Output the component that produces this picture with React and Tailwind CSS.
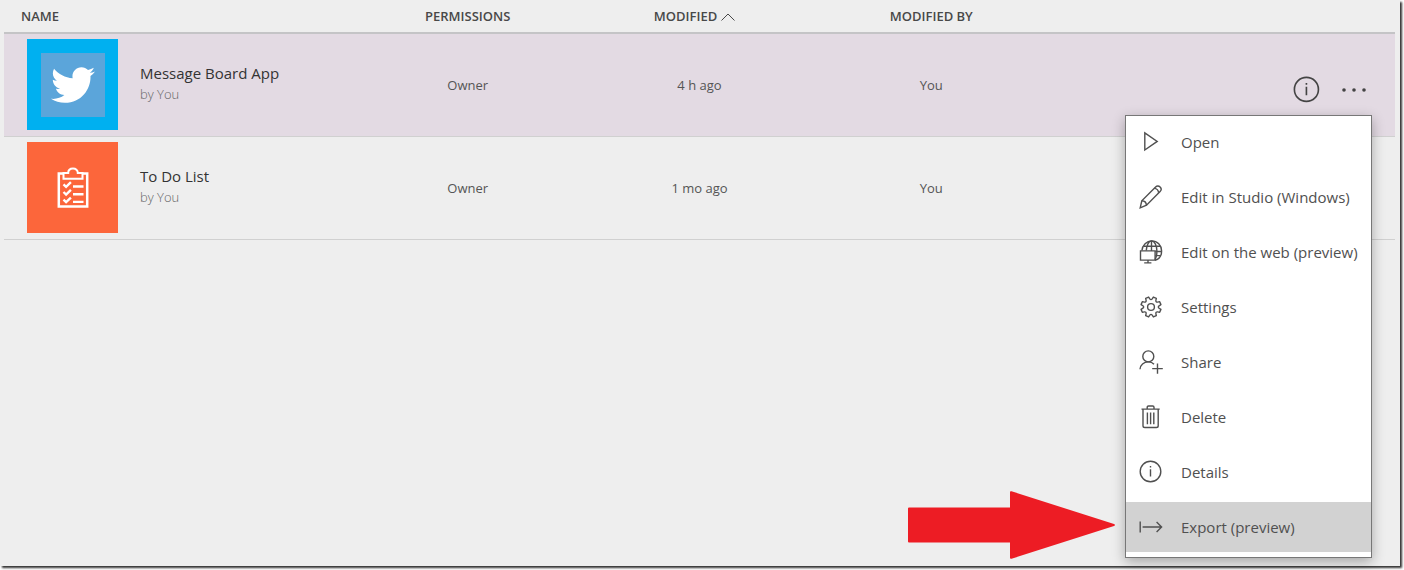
import React from 'react';
import { FaTwitter } from 'react-icons/fa';

function Icon({ children, className = 'size-6' }) {
  return (
    <svg
      viewBox="0 0 24 24"
      className={className}
      fill="none"
      stroke="currentColor"
      strokeWidth="1.4"
      aria-hidden="true"
    >
      {children}
    </svg>
  );
}

const PlayIcon = () => (
  <Icon>
    <path d="M5.8 2.800v17.2L18.200 11.400z" />
  </Icon>
);

const PencilIcon = () => (
  <Icon>
    <path d="M1.200 22.800l1.600-7L16.600 2c1.300-1.300 3.200-1.300 4.500 0s1.300 3.200 0 4.500L7.500 20.200z" />
    <path d="M2.800 15.800c2.600.1 4.500 1.900 4.700 4.400M15.200 3.400c2.400.2 4.200 2 4.400 4.400" />
  </Icon>
);

const WebIcon = () => (
  <Icon>
    <path d="M1.500 10.900h14.600v9.200H1.500zM9 20.100v2.700M5.200 22.900h7.200" />
    <path d="M2.900 10.500C3.500 5 7.500.9 12.800.9c5.500 0 9.800 4.400 9.800 10 0 4.700-2.700 8.300-6.500 9.300" />
    <path d="M7.300 10.500C7.600 5.500 9.500.9 12.500.9s5.400 4.400 5.400 10c0 3.800-.8 6.900-1.800 8.700M12.500.9v10M4.500 6.300h16.800M16.300 11.500h6.300M16.300 15.600h5.200" />
  </Icon>
);

const teeth = Array.from({ length: 8 }, (_, i) => {
  const point = (radius, degrees) => {
    const angle = ((degrees + i * 45) * Math.PI) / 180;
    return `${(12 + radius * Math.sin(angle)).toFixed(2)} ${(12 - radius * Math.cos(angle)).toFixed(2)}`;
  };
  return `${i ? 'L' : 'M'}${point(8.2, -14)}L${point(10.2, -9)}L${point(10.2, 9)}L${point(8.2, 14)}Q${point(6.6, 22.5)} ${point(8.2, 31)}`;
}).join('');

const GearIcon = () => (
  <Icon>
    <g transform="rotate(22.5 12 12)">
      <path d={`${teeth}z`} strokeLinejoin="round" />
    </g>
    <circle cx="12" cy="12" r="3.400" />
  </Icon>
);

const ShareIcon = () => (
  <Icon>
    <circle cx="9.300" cy="6.400" r="5.500" />
    <path d="M1 19.200C1.200 14.900 4.800 11.900 9.300 11.900c2.300 0 4.400.8 5.700 2.400M18.500 13.400v10.400M13.200 18.600h10.600" />
  </Icon>
);

const TrashIcon = () => (
  <Icon>
    <path d="M2.500 4.100h18.200M8.200 4V2.300c0-.8.500-1.300 1.300-1.300h4.200c.8 0 1.300.5 1.300 1.300V4M4 4.200v16.500c0 1.100.7 1.800 1.800 1.800h11.600c1.100 0 1.800-.7 1.800-1.800V4.200M8.400 7.500v11.700M11.600 7.500v11.700M14.800 7.500v11.700" />
  </Icon>
);

const InfoIcon = ({ className }) => (
  <Icon className={className}>
    <circle cx="11.500" cy="11.500" r="10.300" />
    <path d="M11.500 9.200v7.400M11.500 6v1.600" />
  </Icon>
);

const ExportIcon = () => (
  <Icon>
    <path d="M1.200 6.500v11M3.600 12h19M17.600 7l5 5-5 5" />
  </Icon>
);

const ClipboardIcon = () => (
  <svg viewBox="0 0 32 42" className="h-[42px] w-8" fill="none" stroke="#fff" aria-hidden="true">
    <path d="M6 6.500H1.800v33h28.400v-33H26" strokeWidth="2.500" />
    <path d="M6.500 6v5.800h19V6h-4.700c0-2.800-2-4.500-4.800-4.500S11.200 3.200 11.200 6z" strokeWidth="2" />
    <path d="M6.500 17.300l2.600 2.500 4.800-4.600M6.500 25l2.600 2.500 4.800-4.600M6.500 32.700l2.600 2.500 4.800-4.600" strokeWidth="2.400" />
    <path d="M16 19.500h10.500M16 27.200h10.500M16 34.900h10.500" strokeWidth="2.400" />
  </svg>
);

const menuItems = [
  { label: 'Open', Glyph: PlayIcon },
  { label: 'Edit in Studio (Windows)', Glyph: PencilIcon },
  { label: 'Edit on the web (preview)', Glyph: WebIcon },
  { label: 'Settings', Glyph: GearIcon },
  { label: 'Share', Glyph: ShareIcon },
  { label: 'Delete', Glyph: TrashIcon },
  { label: 'Details', Glyph: InfoIcon },
  { label: 'Export (preview)', Glyph: ExportIcon, active: true },
];

function AppMenu() {
  return (
    <ul
      role="menu"
      className="absolute top-full right-0 z-10 mt-[11px] w-[247px] border border-[#777] bg-white pt-px text-[#505050] shadow-[0_4px_12px_rgba(0,0,0,0.3)]"
    >
      {menuItems.map(({ label, Glyph, active }) => (
        <li key={label} role="none" className="relative mb-[5px]">
          <button
            type="button"
            role="menuitem"
            className={`flex h-[50px] w-full items-center gap-[18px] pl-[13px] text-left text-[15px] whitespace-nowrap ${active ? 'bg-[#d2d2d2]' : ''}`}
          >
            <Glyph />
            {label}
          </button>
          {active && (
            <svg
              viewBox="0 0 207 68"
              className="absolute -top-[11px] right-full mr-[11px] h-[68px] w-[207px]"
              fill="#ed1c24"
              aria-hidden="true"
            >
              <path d="M0 17.500Q0 16.500 1 16.500H102V1Q102 0 103.500.3L206 33Q208 34 206 35L103.500 67.700Q102 68 102 67V51.500H1Q0 51.500 0 50.500z" />
            </svg>
          )}
        </li>
      ))}
    </ul>
  );
}

const apps = [
  {
    name: 'Message Board App',
    modified: '4 h ago',
    selected: true,
    tile: (
      <div className="flex size-[91px] items-center justify-center bg-[#00b0f0]">
        <div className="flex size-16 items-center justify-center bg-[#5ba5da]">
          <FaTwitter className="size-11 text-white" aria-hidden="true" />
        </div>
      </div>
    ),
  },
  {
    name: 'To Do List',
    modified: '1 mo ago',
    tile: (
      <div className="flex size-[91px] items-center justify-center bg-[#fc663b]">
        <ClipboardIcon />
      </div>
    ),
  },
];

export default function App() {
  return (
    <div className="flex min-h-screen bg-white pr-1 pb-1 font-['Open_Sans','Noto_Sans',sans-serif]">
      <main className="grow bg-[#eee] pr-[5px] pl-1 shadow-[2px_2px_2px_#333]">
        <table className="w-full table-fixed border-collapse text-center text-[#555]">
          <thead>
            <tr className="h-[33px] border-b-2 border-[#c4c4c6] text-[13px] text-[#484848]">
              <th className="w-1/4 pt-0.5 pl-[17px] text-left font-semibold">NAME</th>
              <th className="w-1/6 pt-0.5 font-semibold">PERMISSIONS</th>
              <th className="w-1/6 pt-0.5 font-semibold">
                <button type="button" className="inline-flex items-center gap-1 pr-2.5">
                  MODIFIED
                  <svg viewBox="0 0 14 8" className="h-2 w-3.5" fill="none" stroke="currentColor" aria-hidden="true">
                    <path d="M.5 7.500L7 1l6.500 6.500" />
                  </svg>
                </button>
              </th>
              <th className="w-1/6 pt-0.5 font-semibold">MODIFIED BY</th>
              <th className="w-1/4" aria-label="Actions" />
            </tr>
          </thead>
          <tbody>
            {apps.map((app) => (
              <tr
                key={app.name}
                className={`h-[103px] border-b border-[#d0d0d0] text-[13px] ${app.selected ? 'bg-[#e3dae3]' : ''}`}
              >
                <td className="pl-[23px] text-left">
                  <div className="flex items-center gap-[22px]">
                    {app.tile}
                    <div className="pb-1">
                      <div className="text-[15px] leading-[22px] text-[#333]">{app.name}</div>
                      <div className="leading-5 font-light text-[#666]">by You</div>
                    </div>
                  </div>
                </td>
                <td className="pt-0.5">Owner</td>
                <td className="pt-0.5">{app.modified}</td>
                <td className="pt-0.5">You</td>
                <td className="pr-[23px]">
                  {app.selected && (
                    <div className="relative flex items-center justify-end gap-5 pt-2.5 text-[#444]">
                      <button type="button" aria-label="Details">
                        <InfoIcon className="size-7" />
                      </button>
                      <button type="button" aria-label="More actions" className="pr-[5px]">
                        <svg viewBox="0 0 26 28" className="h-7 w-[26px]" fill="currentColor" aria-hidden="true">
                          <circle cx="3" cy="14" r="1.800" />
                          <circle cx="13" cy="14" r="1.800" />
                          <circle cx="23" cy="14" r="1.800" />
                        </svg>
                      </button>
                      <AppMenu />
                    </div>
                  )}
                </td>
              </tr>
            ))}
          </tbody>
        </table>
      </main>
    </div>
  );
}
